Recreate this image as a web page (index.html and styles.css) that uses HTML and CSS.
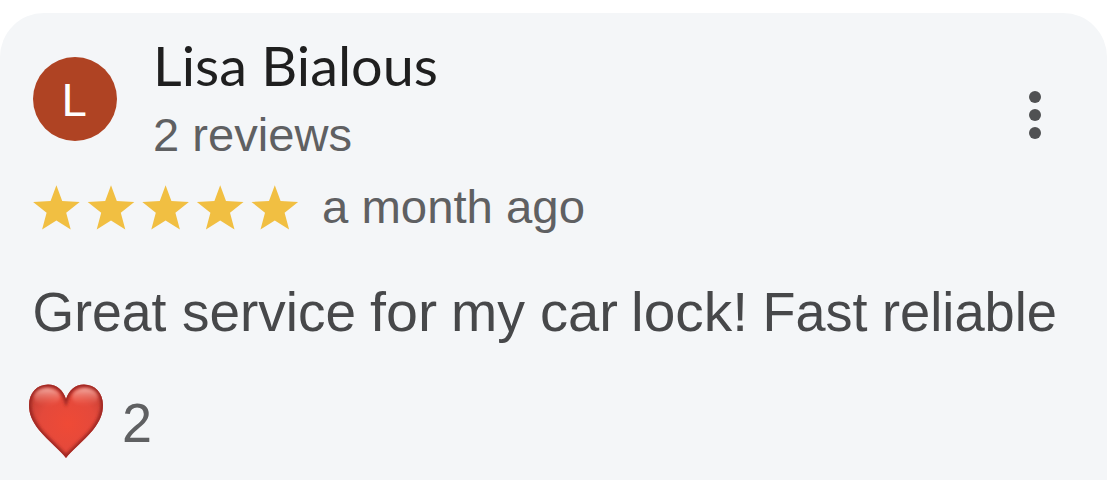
FILE: index.html
```html
<!DOCTYPE html>
<html lang="en"><head><meta charset="utf-8"><title>Review</title><link rel="stylesheet" href="styles.css"></head>
<body>
<article class="card">
<header class="header">
<div class="avatar"><svg class="full" viewBox="0 0 84 84"><text class="initial" x="28.5" y="59" textLength="25" lengthAdjust="spacingAndGlyphs">L</text></svg></div>
<div class="author">
<svg width="300" height="70" viewBox="0 0 300 70"><text class="name" x="-1" y="54.5" textLength="285" lengthAdjust="spacingAndGlyphs">Lisa Bialous</text></svg>
<svg width="300" height="60" viewBox="0 0 300 60"><text class="count" x="-1" y="50" textLength="199" lengthAdjust="spacingAndGlyphs">2 reviews</text></svg>
</div>
<svg class="menu" width="12" height="48" viewBox="0 0 12 48"><circle cx="6" cy="6" r="6"/><circle cx="6" cy="24" r="6"/><circle cx="6" cy="42" r="6"/></svg>
</header>
<div class="rating">
<svg class="stars" width="266" height="46" viewBox="0 0 266 46"><defs><path id="star" d="M23.4 .3 29.2 16 46.7 17 33.2 27.7 37.7 44.4 23.4 35.6 9.1 44.4 13.6 27.7 .1 17 17.6 16Z"/></defs><use href="#star"/><use href="#star" x="54.6"/><use href="#star" x="109.2"/><use href="#star" x="163.8"/><use href="#star" x="218.4"/></svg>
<svg width="270" height="64" viewBox="0 0 270 64"><text class="date" x="-1" y="38" textLength="263" lengthAdjust="spacingAndGlyphs">a month ago</text></svg>
</div>
<svg class="review" width="1040" height="80" viewBox="0 0 1040 80"><text class="body" y="66"><tspan x="-.5" textLength="134" lengthAdjust="spacingAndGlyphs">Great</tspan> <tspan x="149" textLength="174" lengthAdjust="spacingAndGlyphs">service</tspan> <tspan x="337" textLength="67" lengthAdjust="spacingAndGlyphs">for</tspan> <tspan x="418" textLength="74" lengthAdjust="spacingAndGlyphs">my</tspan> <tspan x="507" textLength="78" lengthAdjust="spacingAndGlyphs">car</tspan> <tspan x="598" textLength="117" lengthAdjust="spacingAndGlyphs">lock!</tspan> <tspan x="729.5" textLength="105" lengthAdjust="spacingAndGlyphs">Fast</tspan> <tspan x="849" textLength="175" lengthAdjust="spacingAndGlyphs">reliable</tspan></text></svg>
<footer class="reactions">
<svg width="76" height="76" viewBox="0 0 76 76"><defs>
<radialGradient id="red" gradientUnits="userSpaceOnUse" cx="40" cy="40" r="42"><stop stop-color="#ef4a36"/><stop offset=".65" stop-color="#e4493b"/><stop offset="1" stop-color="#cb4237"/></radialGradient>
<linearGradient id="gloss" x1="0" y1="0" x2="0" y2="1"><stop stop-color="#ffd1c8" stop-opacity=".75"/><stop offset="1" stop-color="#ff7969" stop-opacity="0"/></linearGradient>
<clipPath id="shape"><path id="heart" d="M38 74C33 67 20 57 11 46C4 37 1 30 1 21C1 9 9 .5 20 .5C29 .5 35 6 38 15C41 6 47 .5 56 .5C67 .5 75 9 75 21C75 30 72 37 65 46C56 57 43 67 38 74Z"/></clipPath><filter id="soft"><feGaussianBlur stdDeviation="1.5"/></filter></defs>
<use href="#heart" fill="url(#red)"/><g clip-path="url(#shape)"><use href="#heart" class="rim" filter="url(#soft)"/><g fill="url(#gloss)" filter="url(#soft)"><ellipse cx="19" cy="13" rx="13" ry="9"/><ellipse cx="57" cy="13" rx="13" ry="9"/></g></g></svg>
<svg width="40" height="60" viewBox="0 0 40 60"><text class="likes" x="0" y="58" textLength="30" lengthAdjust="spacingAndGlyphs">2</text></svg>
</footer>
</article>
</body></html>
```
FILE: styles.css
```css
body{margin:0;background:#fff;height:480px;overflow:hidden}
.card{box-sizing:border-box;width:1107px;height:467px;margin-top:13px;padding:18px 33px 0;background:#f4f6f8;border-radius:44px 44px 0 0;font-family:"Liberation Sans",Arial,sans-serif}
svg{display:block;overflow:visible}
.header{display:flex;height:140px}
.avatar{width:84px;height:84px;margin-top:26px;border-radius:50%;background:#af4323}
.full{width:84px;height:84px}
.initial{font:45px Roboto,sans-serif;fill:#fff}
.author{margin-left:37px}
.name{font:54px Lato,sans-serif;fill:#1f1f1f}
.count,.date{font-size:47px;fill:#5f6062}
.menu{margin:60px 33px 0 auto;fill:#505153}
.rating{display:flex;gap:24px;margin-top:14px;height:80px}
.stars{fill:#f1bf42}
.body{font-size:55px;fill:#47484a}
.likes{font-size:56px;fill:#5f6062}
.reactions{display:flex;gap:18px;margin:39px 0 0 -5px}
.rim{fill:none;stroke:#9e2720;stroke-width:5px}
```
